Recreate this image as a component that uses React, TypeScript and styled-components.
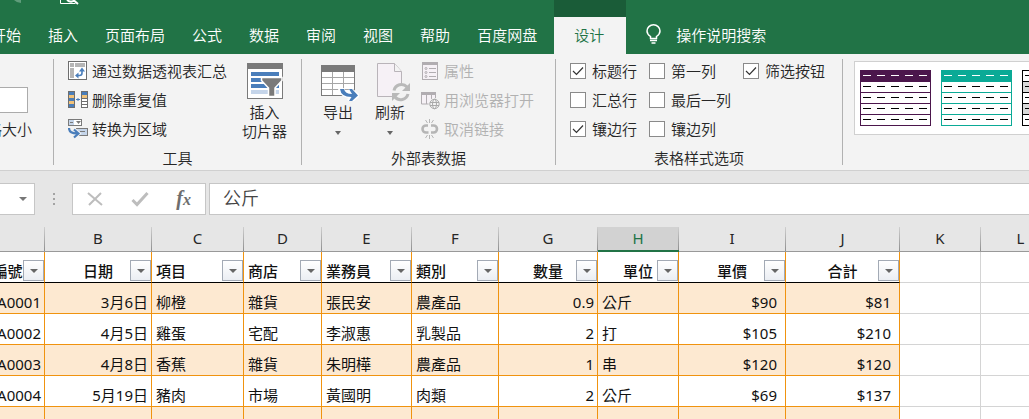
import React from "react";
import styled, { createGlobalStyle, css } from "styled-components";

const GlobalStyle = createGlobalStyle`
  * { box-sizing: border-box; }
  body {
    margin: 0;
    background: #fff;
    overflow: hidden;
    font-family: "Noto Sans CJK SC", "Noto Sans", sans-serif;
    font-size: 15px;
    font-weight: 350;
    color: #262626;
  }
  button, input { font: inherit; color: inherit; }
  svg { display: block; flex: none; }
`;

const Window = styled.div`
  overflow: hidden;
`;

/* ---------- title strip and tabs ---------- */

const TopBar = styled.header`
  display: flex;
  align-items: flex-end;
  height: 54px;
  background: #217346;
  color: #fff;
`;

const TabArea = styled.div`
  display: flex;
  flex-direction: column;
  flex: none;
  height: 54px;
`;

const QuickAccess = styled.div`
  display: flex;
  height: 17px;
  padding-left: 14px;
  gap: 38px;
`;

const TabList = styled.nav`
  display: flex;
  gap: 27px;
  margin-left: -9px;
  padding-right: 17px;
`;

const Tab = styled.button`
  border: 0;
  padding: 0 0 3px;
  background: none;
  height: 37px;
  white-space: nowrap;
`;

const DesignColumn = styled.div`
  flex: none;
  width: 72px;
  height: 54px;
  padding-top: 17px;
  background: #1a5c38;
`;

const ActiveTab = styled(Tab)`
  width: 100%;
  padding-right: 2px;
  background: #f3f3f3;
  color: #217346;
`;

const TellMe = styled(Tab)`
  display: flex;
  align-items: center;
  gap: 14px;
  margin-left: 20px;
`;

/* ---------- ribbon ---------- */

const Ribbon = styled.section`
  display: flex;
  padding-top: 2px;
  background: #f3f3f3;
  border-bottom: 1px solid #d0d0d0;
`;

const Divider = styled.div`
  flex: none;
  width: 1px;
  margin: 3px 0 5px;
  background: #b1b1b1;
`;

const Group = styled.div`
  flex: none;
`;

const GroupBody = styled.div<{ $gap: number; $left: number; $right: number }>`
  display: flex;
  gap: ${(p) => p.$gap}px;
  height: 87px;
  padding: 0 ${(p) => p.$right}px 0 ${(p) => p.$left}px;
`;

const Caption = styled.div`
  padding-top: 3px;
  line-height: 24px;
  text-align: center;
`;

const Stack = styled.div`
  display: flex;
  flex-direction: column;
`;

const Pair = styled.div`
  display: flex;
`;

const Command = styled.button`
  display: flex;
  align-items: center;
  gap: 4px;
  height: 29px;
  padding: 0;
  border: 0;
  background: none;
  white-space: nowrap;
  &:disabled { color: #b1b1b1; }
`;

const BigButton = styled.button<{ $width: number }>`
  display: flex;
  flex-direction: column;
  align-items: center;
  width: ${(p) => p.$width}px;
  padding: 7px 0 0;
  border: 0;
  background: none;
  line-height: 19px;
  white-space: nowrap;
`;

const BigIcon = styled.span`
  height: 39px;
`;

const Arrow = styled.span`
  margin-top: 10px;
  border: 3px solid transparent;
  border-top: 4px solid #666;
  border-bottom: 0;
`;

const SizeGroup = styled(Stack)`
  flex: none;
  width: 66px;
  margin-left: -13px;
  padding-top: 31px;
`;

const SizeInput = styled.input`
  width: 41px;
  height: 26px;
  border: 1px solid #ababab;
  background: #fff;
`;

const SizeLabel = styled.label`
  line-height: 32px;
`;

const CheckLabel = styled.label`
  display: flex;
  align-items: center;
  gap: 6px;
  height: 29px;
  white-space: nowrap;
`;

const CheckWrap = styled.span`
  display: grid;
  > * { grid-area: 1 / 1; }
  svg { pointer-events: none; visibility: hidden; }
  input:checked + svg { visibility: visible; }
`;

const CheckInput = styled.input`
  appearance: none;
  width: 16px;
  height: 16px;
  margin: 0;
  border: 1px solid #8a8a8a;
  background: #fff;
`;

const Gallery = styled.div`
  display: flex;
  flex: 1;
  gap: 10px;
  min-width: 0;
  height: 74px;
  margin: 5px 0 0 11px;
  padding: 8px 0 0 5px;
  border: 1px solid #d0d0d0;
  border-right: 0;
  background: #fff;
  overflow: hidden;
`;

/* ---------- formula bar ---------- */

const FormulaBar = styled.section`
  display: flex;
  padding: 12px 0;
  background: #e6e6e6;
`;

const NameBox = styled.button`
  display: flex;
  align-items: center;
  justify-content: flex-end;
  width: 35px;
  height: 32px;
  padding: 0 7px 0 0;
  border: 1px solid #c6c6c6;
  border-left: 0;
  background: #fff;
`;

const NameArrow = styled.span`
  border: 4px solid transparent;
  border-top: 4px solid #777;
  border-bottom: 0;
`;

const Grip = styled.div`
  display: flex;
  flex-direction: column;
  justify-content: center;
  align-items: center;
  gap: 3px;
  width: 37px;
  i { width: 2px; height: 2px; background: #a3a3a3; }
`;

const EditButtons = styled.div`
  display: flex;
  align-items: center;
  justify-content: space-between;
  width: 134px;
  height: 32px;
  margin-right: 3px;
  padding: 0 14px;
  border: 1px solid #c6c6c6;
  background: #fff;
`;

const EditButton = styled.button`
  padding: 0;
  border: 0;
  background: none;
`;

const FxButton = styled(EditButton)`
  font: italic bold 20px/24px "Liberation Serif", serif;
  color: #6e6e6e;
  padding-bottom: 2px;
  sub { font-size: 16px; line-height: 0; vertical-align: baseline; }
`;

const FormulaInput = styled.input`
  flex: 1;
  min-width: 0;
  height: 32px;
  padding: 0 13px 4px;
  border: 1px solid #c6c6c6;
  border-right: 0;
  background: #fff;
  font-size: 18px;
  color: #444;
  outline: none;
`;

/* ---------- worksheet ---------- */

const Sheet = styled.table`
  table-layout: fixed;
  width: 1090px;
  margin-left: -29px;
  border-collapse: separate;
  border-spacing: 0;
  font-family: "Noto Sans", "Noto Sans CJK TC", sans-serif;
  font-size: 15px;
  font-weight: 400;
  line-height: 20px;
  color: #111;
`;

const Letter = styled.th<{ $active?: boolean }>`
  height: 25px;
  padding: 0 1px 3px 0;
  font-weight: 400;
  color: #262626;
  border-bottom: 1px solid #999;
  background: linear-gradient(#cfcfcf, #8f8f8f) right / 1px 100% no-repeat #e6e6e6;
  ${(p) =>
    p.$active &&
    css`
      padding-bottom: 2px;
      color: #217346;
      border-bottom: 2px solid #217346;
      background-color: #d2d2d2;
    `}
`;

const HeadCell = styled.th<{ $plain?: boolean }>`
  height: 31px;
  padding: 0;
  font-weight: 500;
  border-right: 1px solid ${(p) => (p.$plain ? "#d4d4d4" : "#f0930f")};
  border-bottom: 1px solid ${(p) => (p.$plain ? "#d4d4d4" : "#000")};
`;

const HeadInner = styled.div<{ $align: string }>`
  display: grid;
  height: 30px;
  padding-bottom: 1px;
  align-items: end;
  > * { grid-area: 1 / 1; }
  > span { text-align: ${(p) => p.$align}; padding: 0 4px; }
`;

const FilterButton = styled.button`
  display: grid;
  place-items: center;
  justify-self: end;
  width: 21px;
  height: 21px;
  padding: 0;
  border: 1px solid #a3aab5;
  background: linear-gradient(#fff, #ebeef3);
`;

const Cell = styled.td<{ $band?: boolean; $plain?: boolean; $align?: string; $money?: boolean }>`
  height: 31px;
  padding: 0 ${(p) => (p.$money ? 8 : 3)}px 1px 4px;
  vertical-align: bottom;
  white-space: nowrap;
  text-align: ${(p) => p.$align ?? "left"};
  background: ${(p) => (p.$band ? "#fde9d1" : "#fff")};
  border-right: 1px solid ${(p) => (p.$plain ? "#d4d4d4" : "#f0930f")};
  border-bottom: 1px solid ${(p) => (p.$plain ? "#d4d4d4" : "#f0930f")};
`;

/* ---------- icons ---------- */

const BLUE = "#4a7ebb";
const GRAY = "#7a7a7a";

const PivotIcon = () => (
  <svg width="20" height="20" viewBox="0 0 20 20">
    <rect x=".5" y=".5" width="18" height="18" fill="#fff" stroke="#6e6e6e" />
    <path d="M2 2h4v4H2zM7 2h10v4H7zM2 7h4v10H2z" fill="#b5b5b5" />
    <path d="M9.500 14.500h2q2.500 0 2.500-2.500v-2" fill="none" stroke={BLUE} strokeWidth="1.600" />
    <path d="M11 10.500L14 6.500l3 4zM10.500 11.500v6L7 14.500z" fill={BLUE} />
  </svg>
);

const DedupeIcon = () => (
  <svg width="20" height="18" viewBox="0 0 20 18">
    <rect width="7" height="17" fill="#6e6e6e" />
    <path d="M1 1h5v3H1zM1 7h5v3H1zM1 13h5v3H1z" fill={BLUE} />
    <path d="M1 4h5v3H1zM1 10h5v3H1z" fill="#f2c279" />
    <rect x="13" width="7" height="17" fill="#6e6e6e" />
    <path d="M14 1h5v3h-5z" fill={BLUE} />
    <path d="M14 4h5v3h-5z" fill="#f2c279" />
    <path d="M14 8h5v2h-5zM14 11h5v2h-5zM14 14h5v2h-5z" fill="#fff" />
    <path d="M8 8.500h4M10 7v3" fill="none" stroke={BLUE} />
  </svg>
);

const RangeIcon = () => (
  <svg width="20" height="20" viewBox="0 0 20 20">
    <rect x=".5" y=".5" width="13" height="6" fill="#fff" stroke={GRAY} />
    <path d="M1 1h5v5H1z" fill="#c5d5ea" />
    <path d="M2 3.500h3" stroke={GRAY} />
    <path d="M8 2h5l-2.500 3z" fill={GRAY} />
    <rect x="8.500" y="9.500" width="11" height="7" fill="#c5d5ea" stroke={GRAY} />
    <path d="M12 12.500h5" stroke={GRAY} />
    <path d="M1 9Q1 14.500 9 14.500M6 10.500l4.500 4-4.500 4" fill="none" stroke="#f3f3f3" strokeWidth="4" />
    <path d="M1 9Q1 14.500 9 14.500M6 10.500l4.500 4-4.500 4" fill="none" stroke={BLUE} strokeWidth="2.200" />
  </svg>
);

const SlicerIcon = () => (
  <svg width="36" height="36" viewBox="0 0 36 36">
    <rect x=".5" y=".5" width="35" height="35" fill="#fff" stroke={GRAY} />
    <path d="M0 0h36v6H0z" fill={GRAY} />
    <path d="M4 9h28v4H4zM4 15h28v4H4zM4 21h28v4H4z" fill={BLUE} />
    <path d="M4 27h28v4H4z" fill="#c5d5ea" />
    <path d="M14.500 14.500h20.500v3l-7 7.500v8.500h-6.500V25l-7-7.500z" fill={GRAY} stroke="#fff" strokeWidth="1.500" />
  </svg>
);

const ExportIcon = () => (
  <svg width="42" height="38" viewBox="-4 0 42 38">
    <rect x=".5" y="2.500" width="33" height="30" fill="#fff" stroke={GRAY} />
    <path d="M0 2h34v7H0z" fill={GRAY} />
    <path d="M1 14.500h32M1 20.500h32M1 26.500h32M11.500 9v23M22.500 9v23" stroke="#a6a6a6" />
    <path d="M20 25.500Q21 32.500 34 32.500M28 26.500l7 6-7 6" fill="none" stroke="#fff" strokeWidth="6" />
    <path d="M19 26h4Q24 31 31 31l-3-5h3l6 6.500-6 5.500h-3l2.500-4Q20 34 19 26z" fill={BLUE} />
  </svg>
);

const RefreshIcon = () => (
  <svg width="42" height="39" viewBox="-8 0 42 39">
    <path d="M.5.5h17l7 8v25H.5z" fill="#f6f1f6" stroke="#b9b4b9" />
    <path d="M17.500.5v8h7" fill="#f3f3f3" stroke="#b9b4b9" />
    <circle cx="24" cy="29" r="9" fill="#f3f3f3" />
    <path d="M17 27.500a7.500 7.500 0 0 1 13-3.500M31 31a7.500 7.500 0 0 1-13 3" fill="none" stroke="#b9b9b9" strokeWidth="3" />
    <path d="M33 20v8h-8zM15 38v-8h8z" fill="#b9b9b9" />
  </svg>
);

const PropertiesIcon = () => (
  <svg width="19" height="20" viewBox="0 0 19 20">
    <rect x="1.500" y="1.500" width="15" height="17" fill="#f6f1f6" stroke="#b1adb1" />
    <path d="M1 1h16v3H1z" fill="#b1adb1" />
    <path d="M8 7.500h7M8 11.500h7M8 15.500h7" stroke="#b1adb1" />
    <g fill="none" stroke="#b1adb1">
      <circle cx="5" cy="7.500" r="1" />
      <circle cx="5" cy="11.500" r="1" />
      <circle cx="5" cy="15.500" r="1" />
    </g>
  </svg>
);

const BrowserIcon = () => (
  <svg width="19" height="20" viewBox="0 0 19 20">
    <path d="M.5 3v11h14V3M5.500 3v11M10.500 3v8" fill="#f6f1f6" stroke="#b1adb1" />
    <path d="M0 2h15v3H0z" fill="#b1adb1" />
    <circle cx="13.500" cy="14" r="6" fill="#f3f3f3" />
    <g fill="none" stroke="#a9a9a9">
      <circle cx="13.500" cy="14" r="4.700" />
      <ellipse cx="13.500" cy="14" rx="2" ry="4.700" />
      <path d="M9 12.500h9M9 15.500h9" />
    </g>
  </svg>
);

const UnlinkIcon = () => (
  <svg width="19" height="20" viewBox="0 0 19 20">
    <path d="M7 6.500H5a3.500 3.500 0 0 0 0 7h2.500M10 6.500h2.500a3.500 3.500 0 0 1 0 7H10" fill="none" stroke="#b5b5b5" strokeWidth="2.600" />
    <path d="M8.500 0v4M4.500 1l2 3M12.500 1l-2 3M8.500 16v4M4.500 19l2-3M12.500 19l-2-3" stroke="#b5b5b5" />
  </svg>
);

const BulbIcon = () => (
  <svg width="16" height="20" viewBox="0 0 16 20" fill="none" stroke="#fff" strokeWidth="1.500">
    <path d="M4.500 14.500V12.500Q1 10 1 7a6.500 6.200 0 0 1 13 0Q14 10 10.500 12.500V14.500zM4 16.500h7M5.500 19h4" />
  </svg>
);

const TriangleIcon = () => (
  <svg width="8" height="4" viewBox="0 0 8 4">
    <path d="M0 0h8L4 4z" fill="#666" />
  </svg>
);

interface ThumbProps {
  color: string;
  head: string;
  headDash: string;
  band?: string;
}

const StyleThumb = ({ color, head, headDash, band = "#fff" }: ThumbProps) => (
  <svg width="71" height="56" viewBox="0 0 71 56">
    <rect width="71" height="56" fill={color} />
    <rect x="1" y="1" width="69" height="10" fill={head} />
    {[0, 1, 2, 3].map((r) => (
      <rect key={r} x="1" y={12 + r * 11} width="69" height="10" fill={r % 2 === 0 ? band : "#fff"} />
    ))}
    {[0, 1, 2, 3, 4].map((r) => (
      <path
        key={r}
        d={`M3 ${r * 11 + 5.5}h8m6 0h8m6 0h8m6 0h8m6 0h8`}
        stroke={r === 0 ? headDash : "#000"}
      />
    ))}
  </svg>
);

/* ---------- data ---------- */

const tabs = ["开始", "插入", "页面布局", "公式", "数据", "审阅", "视图", "帮助", "百度网盘"];

const optionColumns: [string, boolean][][] = [
  [["标题行", true], ["汇总行", false], ["镶边行", true]],
  [["第一列", false], ["最后一列", false], ["镶边列", false]],
  [["筛选按钮", true]],
];

const widths = [74, 107, 92, 78, 90, 87, 99, 81, 107, 114, 81, 80];
const letters = ["", "B", "C", "D", "E", "F", "G", "H", "I", "J", "K", "L"];

const heads: [string, string][] = [
  ["編號", "center"],
  ["日期", "center"],
  ["項目", "left"],
  ["商店", "left"],
  ["業務員", "left"],
  ["類別", "left"],
  ["數量", "center"],
  ["單位", "center"],
  ["單價", "center"],
  ["合計", "center"],
];

const rightAligned = [0, 1, 6, 8, 9];

const rows = [
  ["A0001", "3月6日", "柳橙", "雜貨", "張民安", "農產品", "0.9", "公斤", "$90", "$81"],
  ["A0002", "4月5日", "雞蛋", "宅配", "李淑惠", "乳製品", "2", "打", "$105", "$210"],
  ["A0003", "4月8日", "香蕉", "雜貨", "朱明樺", "農產品", "1", "串", "$120", "$120"],
  ["A0004", "5月19日", "豬肉", "市場", "黃國明", "肉類", "2", "公斤", "$69", "$137"],
  ["", "", "", "", "", "", "", "", "", ""],
];

const CheckOption = ({ label, on }: { label: string; on: boolean }) => (
  <CheckLabel>
    <CheckWrap>
      <CheckInput type="checkbox" defaultChecked={on} />
      <svg width="16" height="16" viewBox="0 0 16 16">
        <path d="M3 8l3.500 3.500L13 4.500" fill="none" stroke="#333" strokeWidth="1.200" />
      </svg>
    </CheckWrap>
    {label}
  </CheckLabel>
);

export default function App() {
  return (
    <Window>
      <GlobalStyle />
      <TopBar>
        <TabArea>
          <QuickAccess>
            <svg width="8" height="4" viewBox="0 0 8 4">
              <path d="M0 0h7v3Q3 3 0 0z" fill="#5f9c7b" />
            </svg>
            <svg width="19" height="5" viewBox="0 0 19 5">
              <path d="M.5 0v3.500h15" fill="none" stroke="#fff" />
              <path d="M7 0Q11 3 14 .5L18 4" fill="none" stroke="#fff" strokeWidth="2" />
            </svg>
          </QuickAccess>
          <TabList>
            {tabs.map((t) => (
              <Tab key={t}>{t}</Tab>
            ))}
          </TabList>
        </TabArea>
        <DesignColumn>
          <ActiveTab>设计</ActiveTab>
        </DesignColumn>
        <TellMe>
          <BulbIcon />
          操作说明搜索
        </TellMe>
      </TopBar>

      <Ribbon>
        <SizeGroup>
          <SizeInput id="size" />
          <SizeLabel htmlFor="size">格大小</SizeLabel>
        </SizeGroup>
        <Divider />
        <Group>
          <GroupBody $gap={14} $left={14} $right={13}>
            <Stack>
              <Command><PivotIcon />通过数据透视表汇总</Command>
              <Command><DedupeIcon />删除重复值</Command>
              <Command><RangeIcon />转换为区域</Command>
            </Stack>
            <BigButton $width={47}>
              <BigIcon><SlicerIcon /></BigIcon>
              <span>插入</span>
              <span>切片器</span>
            </BigButton>
          </GroupBody>
          <Caption>工具</Caption>
        </Group>
        <Divider />
        <Group>
          <GroupBody $gap={5} $left={10} $right={21}>
            <Pair>
              <BigButton $width={52}>
                <BigIcon><ExportIcon /></BigIcon>
                <span>导出</span>
                <Arrow />
              </BigButton>
              <BigButton $width={52}>
                <BigIcon><RefreshIcon /></BigIcon>
                <span>刷新</span>
                <Arrow />
              </BigButton>
            </Pair>
            <Stack>
              <Command disabled><PropertiesIcon />属性</Command>
              <Command disabled><BrowserIcon />用浏览器打开</Command>
              <Command disabled><UnlinkIcon />取消链接</Command>
            </Stack>
          </GroupBody>
          <Caption>外部表数据</Caption>
        </Group>
        <Divider />
        <Group>
          <GroupBody $gap={12} $left={14} $right={17}>
            {optionColumns.map((column, i) => (
              <Stack key={i}>
                {column.map(([label, on]) => (
                  <CheckOption key={label} label={label} on={on} />
                ))}
              </Stack>
            ))}
          </GroupBody>
          <Caption>表格样式选项</Caption>
        </Group>
        <Divider />
        <Gallery>
          <StyleThumb color="#4b164c" head="#4b164c" headDash="#fff" />
          <StyleThumb color="#0aaa96" head="#0aaa96" headDash="#fff" />
          <StyleThumb color="#000" head="#fff" headDash="#000" band="#d9d9d9" />
        </Gallery>
      </Ribbon>

      <FormulaBar>
        <NameBox aria-label="Name box">
          <NameArrow />
        </NameBox>
        <Grip><i /><i /><i /></Grip>
        <EditButtons>
          <EditButton aria-label="Cancel">
            <svg width="16" height="16" viewBox="0 0 16 16">
              <path d="M1 2l14 12M14 2L2 14" fill="none" stroke="#bdbdbd" strokeWidth="2" />
            </svg>
          </EditButton>
          <EditButton aria-label="Enter">
            <svg width="18" height="16" viewBox="0 0 18 16">
              <path d="M1.500 9l4.500 4.500L16.500 2" fill="none" stroke="#bdbdbd" strokeWidth="3" />
            </svg>
          </EditButton>
          <FxButton aria-label="Insert function">
            f<sub>x</sub>
          </FxButton>
        </EditButtons>
        <FormulaInput aria-label="Formula" defaultValue="公斤" />
      </FormulaBar>

      <Sheet>
        <colgroup>
          {widths.map((w, i) => (
            <col key={i} style={{ width: w }} />
          ))}
        </colgroup>
        <thead>
          <tr>
            {letters.map((l, i) => (
              <Letter key={i} $active={l === "H"}>{l}</Letter>
            ))}
          </tr>
          <tr>
            {heads.map(([text, align]) => (
              <HeadCell key={text}>
                <HeadInner $align={align}>
                  <span>{text}</span>
                  <FilterButton aria-label={`Filter ${text}`}>
                    <TriangleIcon />
                  </FilterButton>
                </HeadInner>
              </HeadCell>
            ))}
            <HeadCell $plain />
            <HeadCell $plain />
          </tr>
        </thead>
        <tbody>
          {rows.map((row, r) => (
            <tr key={r}>
              {row.map((value, c) => (
                <Cell
                  key={c}
                  $band={r % 2 === 0}
                  $align={rightAligned.includes(c) ? "right" : "left"}
                  $money={c >= 8}
                >
                  {value}
                </Cell>
              ))}
              <Cell $plain />
              <Cell $plain />
            </tr>
          ))}
        </tbody>
      </Sheet>
    </Window>
  );
}
